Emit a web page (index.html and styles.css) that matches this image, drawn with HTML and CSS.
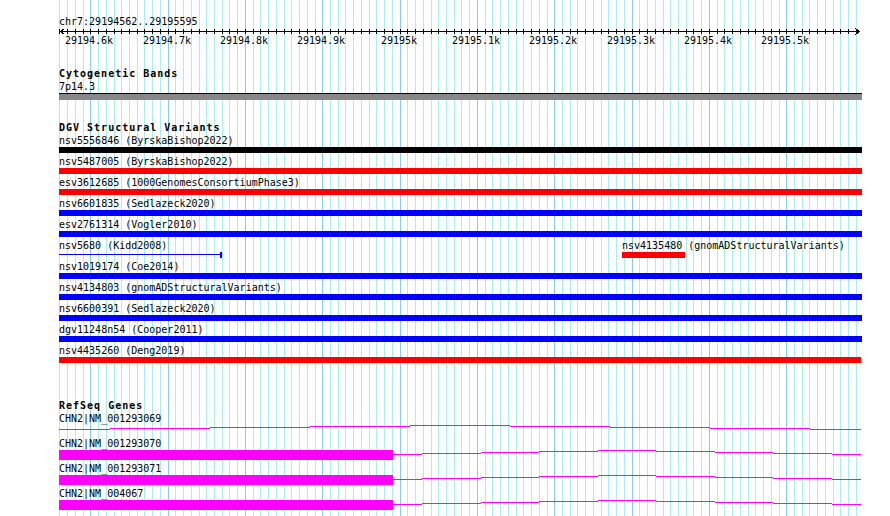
FILE: index.html
```html
<!DOCTYPE html>
<html lang="en">
<head>
  <meta charset="UTF-8">
  <meta name="viewport" content="width=device-width, initial-scale=1.0">
  <title>chr7:29194562..29195595</title>
  <link rel="stylesheet" href="styles.css">
</head>
<body>

  <div class="browser">
    <svg id="grid" class="grid" width="890" height="516"></svg>

    <div class="content">
      <div class="position">chr7:29194562..29195595</div>

      <svg class="ruler" width="890" height="20">
        <line class="axis" x1="60" y1="3.5" x2="860" y2="3.5"/>
        <polyline class="axis" points="64.5,0.5 60.5,3.5 64.5,6.5"/>
        <polyline class="axis" points="855.5,0.5 859.5,3.5 855.5,6.5"/>
        <g id="ticks" class="axis"></g>
        <text x="89" y="16">29194.6k</text>
        <text x="167" y="16">29194.7k</text>
        <text x="244" y="16">29194.8k</text>
        <text x="321" y="16">29194.9k</text>
        <text x="399" y="16">29195k</text>
        <text x="476" y="16">29195.1k</text>
        <text x="553" y="16">29195.2k</text>
        <text x="631" y="16">29195.3k</text>
        <text x="708" y="16">29195.4k</text>
        <text x="785" y="16">29195.5k</text>
      </svg>

      <section class="track cyto">
        <h2>Cytogenetic Bands</h2>
        <div class="label">7p14.3</div>
        <div class="band"></div>
      </section>

      <section class="track dgv">
        <h2>DGV Structural Variants</h2>

        <div class="sv-row">
          <div class="item">
            <div class="name">nsv5556846 (ByrskaBishop2022)</div>
            <div class="bar black"></div>
          </div>
        </div>
        <div class="sv-row">
          <div class="item">
            <div class="name">nsv5487005 (ByrskaBishop2022)</div>
            <div class="bar red"></div>
          </div>
        </div>
        <div class="sv-row">
          <div class="item">
            <div class="name">esv3612685 (1000GenomesConsortiumPhase3)</div>
            <div class="bar red"></div>
          </div>
        </div>
        <div class="sv-row">
          <div class="item">
            <div class="name">nsv6601835 (Sedlazeck2020)</div>
            <div class="bar blue"></div>
          </div>
        </div>
        <div class="sv-row">
          <div class="item">
            <div class="name">esv2761314 (Vogler2010)</div>
            <div class="bar blue"></div>
          </div>
        </div>
        <div class="sv-row">
          <div class="item" style="width:163px">
            <div class="name">nsv5680 (Kidd2008)</div>
            <div class="bar thin"></div>
          </div>
          <div class="item" style="width:63px;margin-left:400px">
            <div class="name">nsv4135480 (gnomADStructuralVariants)</div>
            <div class="bar red"></div>
          </div>
        </div>
        <div class="sv-row">
          <div class="item">
            <div class="name">nsv1019174 (Coe2014)</div>
            <div class="bar blue"></div>
          </div>
        </div>
        <div class="sv-row">
          <div class="item">
            <div class="name">nsv4134803 (gnomADStructuralVariants)</div>
            <div class="bar blue"></div>
          </div>
        </div>
        <div class="sv-row">
          <div class="item">
            <div class="name">nsv6600391 (Sedlazeck2020)</div>
            <div class="bar blue"></div>
          </div>
        </div>
        <div class="sv-row">
          <div class="item">
            <div class="name">dgv11248n54 (Cooper2011)</div>
            <div class="bar blue"></div>
          </div>
        </div>
        <div class="sv-row">
          <div class="item">
            <div class="name">nsv4435260 (Deng2019)</div>
            <div class="bar red" style="width:802px"></div>
          </div>
        </div>
      </section>

      <section class="track refseq">
        <h2>RefSeq Genes</h2>

        <svg class="defs" width="0" height="0">
          <symbol id="chn2-short" viewBox="0 0 803 10">
            <rect x="0" y="0" width="334" height="10"/>
            <path d="M334 4h29v1h-29z M363 3h59v1h-59z M422 2h58v1h-58z M480 1h59v1h-59z M539 0h58v1h-58z
                     M597 1h59v1h-59z M656 2h58v1h-58z M714 3h59v1h-59z M773 4h29v1h-29z"/>
          </symbol>
        </svg>

        <div class="gene">
          <div class="name">CHN2|NM_001293069</div>
          <svg width="803" height="10">
            <path d="M0 4h51v1h-51z M51 3h100v1h-100z M151 2h100v1h-100z M251 1h100v1h-100z M351 0h100v1h-100z
                     M451 1h100v1h-100z M551 2h100v1h-100z M651 3h100v1h-100z M751 4h51v1h-51z"/>
          </svg>
        </div>
        <div class="gene">
          <div class="name">CHN2|NM_001293070</div>
          <svg width="803" height="10"><use href="#chn2-short"/></svg>
        </div>
        <div class="gene">
          <div class="name">CHN2|NM_001293071</div>
          <svg width="803" height="10"><use href="#chn2-short"/></svg>
        </div>
        <div class="gene">
          <div class="name">CHN2|NM_004067</div>
          <svg width="803" height="10"><use href="#chn2-short"/></svg>
        </div>
      </section>
    </div>
  </div>

  <script src="script.js"></script>
</body>
</html>
```

FILE: styles.css
```css
body {
  margin: 0;
  background-color: #fff;
  color: #000;
  font-family: "DejaVu Sans Mono", "Liberation Mono", monospace;
  font-size: 10px;
  overflow: hidden;
}

.browser {
  position: relative;
  width: 890px;
  height: 516px;
  overflow: hidden;
}

/* guide lines sit under everything */
.grid {
  position: absolute;
  top: 0;
  left: 0;
  shape-rendering: crispEdges;
}

.grid .minor {
  stroke: #aaeeee;
}

.grid .major {
  stroke: #88ccee;
}

.content {
  position: relative;
}

.position {
  margin-left: 59px;
  padding-top: 15px;
  line-height: 13px;
}

.ruler {
  display: block;
  shape-rendering: crispEdges;
}

.ruler .axis {
  stroke: #000;
  fill: none;
}

.ruler text {
  font-size: 10px;
  text-anchor: middle;
  fill: #000;
}

.track {
  margin-left: 59px;
  width: 803px;
}

.track h2 {
  margin: 0;
  font-size: 10px;
  line-height: 13px;
  font-weight: bold;
  letter-spacing: 1px;
}

.cyto {
  margin-top: 19px;
}

.dgv {
  margin-top: 21px;
}

.refseq {
  margin-top: 36px;
}

.label, .name {
  line-height: 13px;
  white-space: nowrap;
}

.band {
  height: 6px;
  border-top: 1px solid #000;
  background-color: #888;
}

.sv-row {
  display: flex;
  margin-bottom: 2px;
}

.item {
  flex: none;
  width: 803px;
}

.bar {
  height: 6px;
}

.bar.black {
  background-color: #000;
}

.bar.red {
  background-color: #f00;
}

.bar.blue {
  background-color: #00f;
}

.bar.thin {
  box-sizing: border-box;
  border-right: 2px solid #00f;
  background: linear-gradient(#00f, #00f) 0 2px / 100% 1px no-repeat;
}

.defs {
  position: absolute;
}

.gene {
  margin-bottom: 2px;
}

.gene svg {
  display: block;
  fill: #f0f;
  shape-rendering: crispEdges;
}
```

FILE: script.js
```js
// guide lines and ruler ticks, one every 10 bp (darker every 100 bp)
const NS = 'http://www.w3.org/2000/svg';
const grid = document.getElementById('grid');
const ticks = document.getElementById('ticks');

for (let k = 0; k < 104; k++) {
  const x = Math.round(59.37 + 7.733 * k) + 0.5;

  const guide = document.createElementNS(NS, 'line');
  guide.setAttribute('x1', x);
  guide.setAttribute('x2', x);
  guide.setAttribute('y1', 0);
  guide.setAttribute('y2', 516);
  guide.setAttribute('class', k % 10 === 4 ? 'major' : 'minor');
  grid.appendChild(guide);

  const tick = document.createElementNS(NS, 'line');
  tick.setAttribute('x1', x);
  tick.setAttribute('x2', x);
  tick.setAttribute('y1', 1);
  tick.setAttribute('y2', 6);
  ticks.appendChild(tick);
}
```
